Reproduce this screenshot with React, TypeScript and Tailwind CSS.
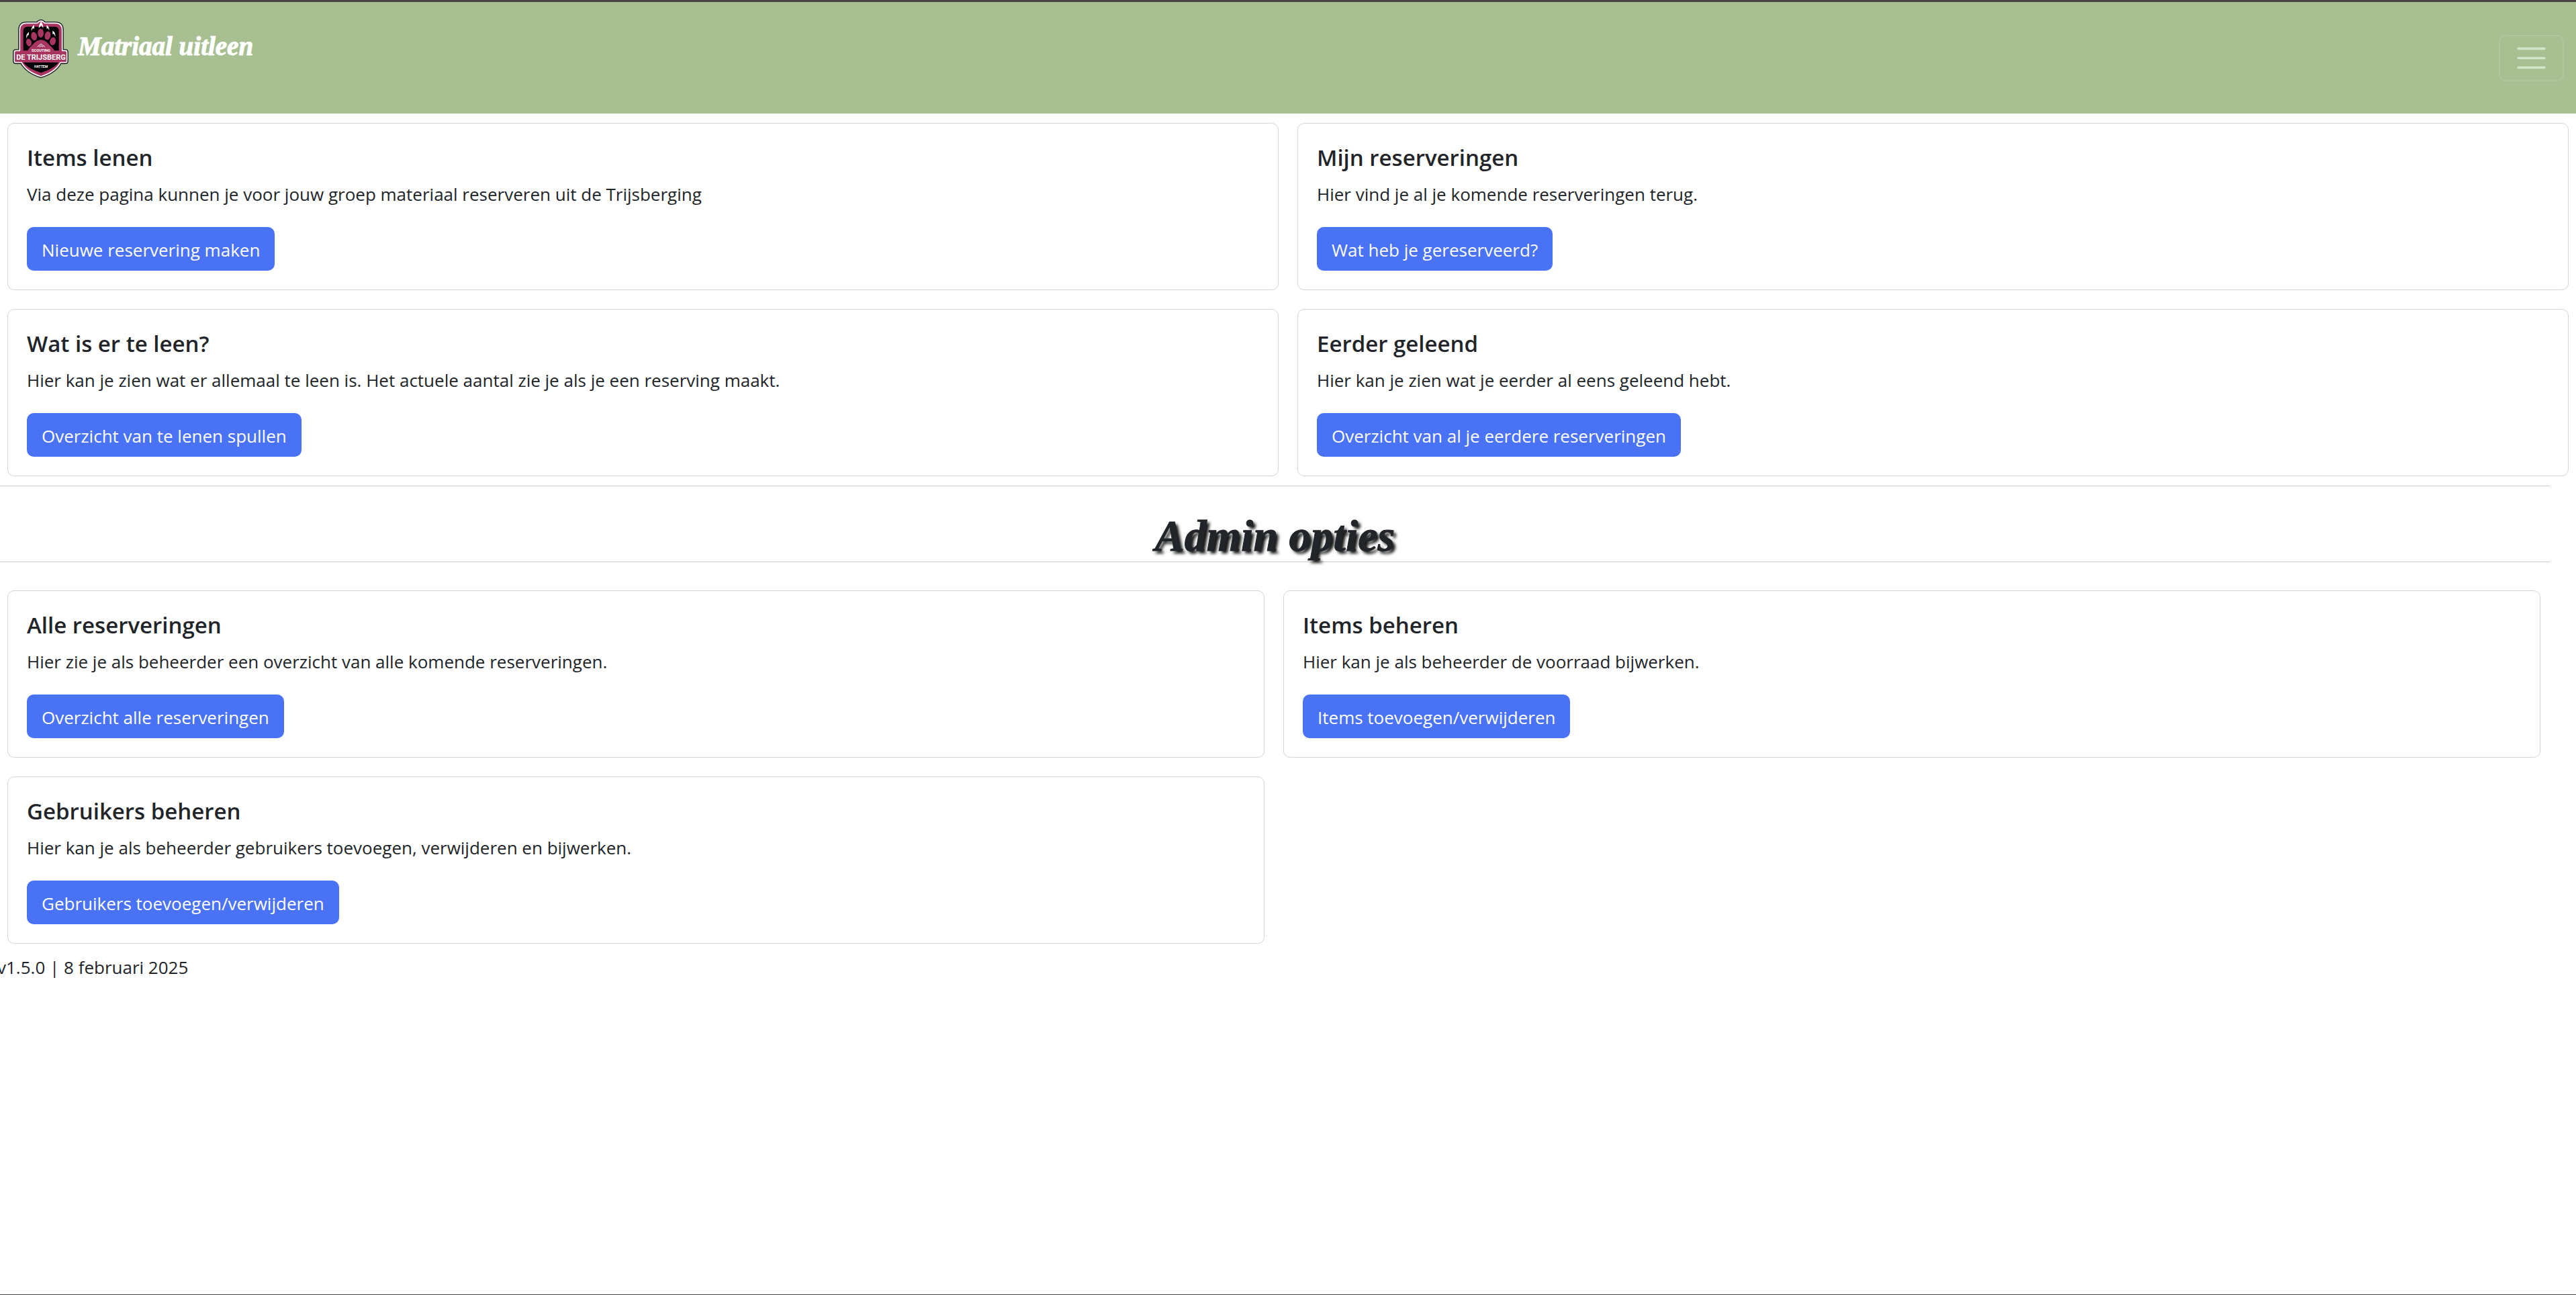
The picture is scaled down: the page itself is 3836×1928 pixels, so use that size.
import React from "react"

type CardItem = {
    title: string
    text: string
    link: string
}

const userCards: CardItem[] = [
    {
        title: "Items lenen",
        text: "Via deze pagina kunnen je voor jouw groep materiaal reserveren uit de Trijsberging",
        link: "Nieuwe reservering maken",
    },
    {
        title: "Mijn reserveringen",
        text: "Hier vind je al je komende reserveringen terug.",
        link: "Wat heb je gereserveerd?",
    },
    {
        title: "Wat is er te leen?",
        text: "Hier kan je zien wat er allemaal te leen is. Het actuele aantal zie je als je een reserving maakt.",
        link: "Overzicht van te lenen spullen",
    },
    {
        title: "Eerder geleend",
        text: "Hier kan je zien wat je eerder al eens geleend hebt.",
        link: "Overzicht van al je eerdere reserveringen",
    },
]

const adminCards: CardItem[] = [
    {
        title: "Alle reserveringen",
        text: "Hier zie je als beheerder een overzicht van alle komende reserveringen.",
        link: "Overzicht alle reserveringen",
    },
    {
        title: "Items beheren",
        text: "Hier kan je als beheerder de voorraad bijwerken.",
        link: "Items toevoegen/verwijderen",
    },
    {
        title: "Gebruikers beheren",
        text: "Hier kan je als beheerder gebruikers toevoegen, verwijderen en bijwerken.",
        link: "Gebruikers toevoegen/verwijderen",
    },
]

function Logo() {
    // same outline twice: black edge, then pink fill with a white line
    const shield =
        "M121 103 H170 Q186 84 202 103 H250 Q281 103 281 134 V226 H296 Q302 226 302 233 V272 Q302 279 296 279 H273 Q250 322 186 342 Q122 322 99 279 H74 Q67 279 67 272 V233 Q67 226 74 226 H91 V134 Q91 103 121 103 Z"
    return (
        <svg viewBox="57 81 252 270" className="h-[90px] w-[84px]" role="img" aria-label="Logo">
            <path d={shield} fill="#15101a" stroke="#15101a" strokeWidth="13" strokeLinejoin="round" />
            <path d={shield} fill="#a8355f" stroke="#fff" strokeWidth="5" strokeLinejoin="round" />
            <path d="M126 119 H247 Q266 119 266 138 V226 H107 V138 Q107 119 126 119 Z" fill="#050305" />
            <path d="M107 279 H265 Q240 309 186 325 Q132 309 107 279 Z" fill="#050305" />
            <path
                d="M124 233 Q130 216 147 202 Q166 178 186 178 Q207 178 224 202 Q243 216 249 233 Z"
                fill="#a8355f"
            />
            <g fill="#a8355f">
                <ellipse cx="132" cy="190" rx="12" ry="17" transform="rotate(-14 132 190)" />
                <ellipse cx="155" cy="162" rx="13" ry="19" transform="rotate(-12 155 162)" />
                <ellipse cx="185" cy="148" rx="13" ry="20" />
                <ellipse cx="216" cy="159" rx="13" ry="19" transform="rotate(12 216 159)" />
                <ellipse cx="239" cy="184" rx="13" ry="18" transform="rotate(14 239 184)" />
            </g>
            <g fill="#fff">
                <path d="M121 172 Q118 152 132 143 L131 158 L127 156 Z" />
                <path d="M142 138 Q143 120 156 112 L156 129 L150 125 Z" />
                <path d="M176 125 Q178 106 187 96 Q196 108 196 125 L188 113 Z" />
                <path d="M223 137 Q224 120 211 112 L212 129 L218 125 Z" />
                <path d="M250 164 Q252 145 238 137 L238 153 L244 151 Z" />
            </g>
            <path d="M170 209 L186 196 L203 209 M178 210 L186 204 L195 210" fill="none" stroke="#fff" strokeWidth="3" />
            <rect x="72" y="234" width="225" height="42" fill="#a8355f" />
            <g fill="#fff" textAnchor="middle" className="font-['Roboto'] font-bold">
                <text x="186" y="230" fontSize="17">
                    SCOUTING
                </text>
                <text x="186" y="267" fontSize="33">
                    DE TRIJSBERG
                </text>
                <text x="186" y="302" fontSize="15">
                    HATTEM
                </text>
            </g>
        </svg>
    )
}

function Card({ title, text, link }: CardItem) {
    return (
        <div className="rounded-[10px] border border-[#d3d4d5] p-7">
            <h5 className="mb-3 pt-0.5 text-[33px] leading-[42px] font-semibold">{title}</h5>
            <p className="mb-7 text-[26px] leading-[42px]">{text}</p>
            <a
                href="#"
                className="inline-block rounded-[10px] bg-[#4a72f5] px-[22px] pt-3.5 pb-2.5 text-[26px] leading-[41px] text-white hover:bg-[#3b62e0]"
            >
                {link}
            </a>
        </div>
    )
}

export default function App() {
    return (
        <div className="flex min-h-screen flex-col overflow-hidden border-t-3 border-b border-t-[#484549] border-b-[#484549] bg-white font-['Open_Sans',sans-serif] text-[#212529]">
            <nav className="flex items-center justify-between bg-[#a8bf91] px-[18px] py-6">
                <a href="#" className="mb-7 flex items-start gap-3.5">
                    <Logo />
                    <span className="font-['Liberation_Serif',serif] text-[39px] leading-[84px] font-bold text-white italic [-webkit-text-stroke:1px_white]">
                        Matriaal uitleen
                    </span>
                </a>
                <button
                    type="button"
                    aria-label="Menu"
                    className="rounded-[10px] border-2 border-[#b0c69b] px-5 py-1.5"
                >
                    <svg viewBox="0 0 30 30" className="h-[53px] w-[53px]" fill="none">
                        <path
                            d="M4 7h22M4 15h22M4 23h22"
                            stroke="#d4e4c9"
                            strokeWidth="2"
                            strokeLinecap="round"
                        />
                    </svg>
                </button>
            </nav>

            <main>
                <div className="grid grid-cols-2 gap-7 px-[11px] py-3.5">
                    {userCards.map((card) => (
                        <Card key={card.title} {...card} />
                    ))}
                </div>

                <div className="mr-[39px]">
                    <div className="border-y border-[#c8c9ca] pt-9">
                        <h1 className="text-center font-['Liberation_Serif',serif] text-[66px] leading-[76px] font-bold italic [-webkit-text-stroke:1px_#212529] [text-shadow:4px_4px_4px_#111]">
                            Admin opties
                        </h1>
                    </div>
                    <div className="mt-7 mr-[3px] grid grid-cols-2 gap-7 px-[11px] py-3.5">
                        {adminCards.map((card) => (
                            <Card key={card.title} {...card} />
                        ))}
                    </div>
                </div>
            </main>

            <footer className="-ml-1 text-[26px] leading-[42px]">v1.5.0 | 8 februari 2025</footer>
        </div>
    )
}
